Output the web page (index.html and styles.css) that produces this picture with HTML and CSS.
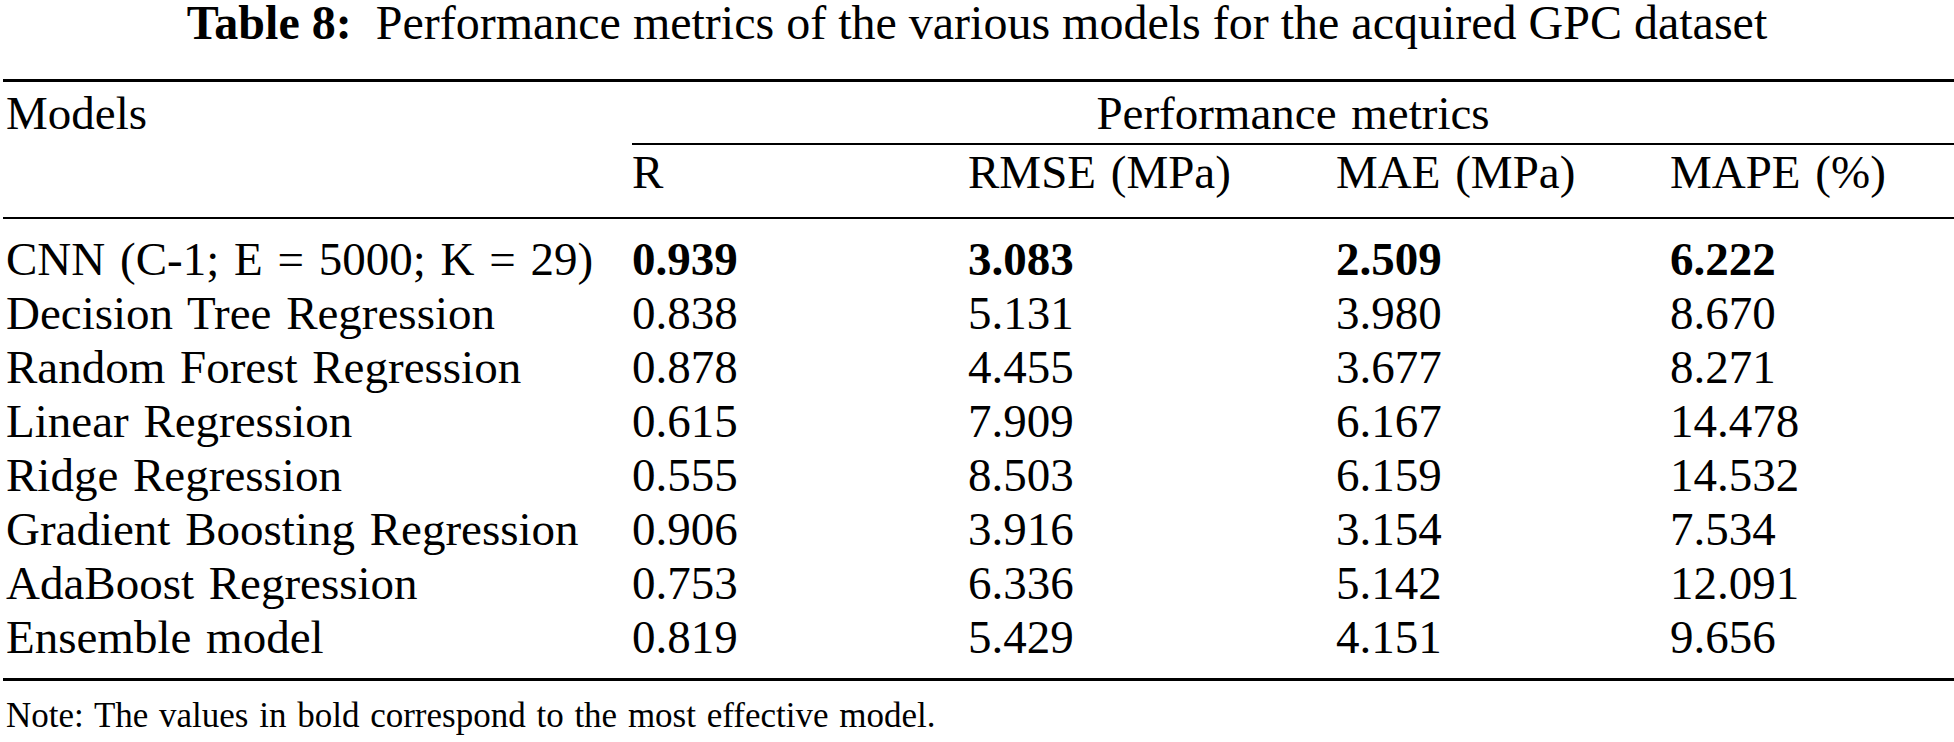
FILE: index.html
```html
<!DOCTYPE html>
<html lang="en">
<head>
<meta charset="utf-8">
<title>Table 8</title>
<link rel="stylesheet" href="styles.css">
</head>
<body>
<div class="page">
  <div class="caption"><span class="cap-label">Table 8:</span>&nbsp; Performance metrics of the various models for the acquired GPC dataset</div>
  <table class="metrics">
    <colgroup>
      <col class="c-model">
      <col class="c-r">
      <col class="c-rmse">
      <col class="c-mae">
      <col class="c-mape">
    </colgroup>
    <thead>
      <tr class="head-1">
        <th class="cell-model">Models</th>
        <th class="group" colspan="4">Performance metrics</th>
      </tr>
      <tr class="head-2">
        <th class="cell-model"></th>
        <th>R</th>
        <th>RMSE (MPa)</th>
        <th>MAE (MPa)</th>
        <th>MAPE (%)</th>
      </tr>
    </thead>
    <tbody>
      <tr class="first">
        <td class="cell-model">CNN (C-1; E = 5000; K = 29)</td>
        <td class="best">0.939</td>
        <td class="best">3.083</td>
        <td class="best">2.509</td>
        <td class="best">6.222</td>
      </tr>
      <tr>
        <td class="cell-model">Decision Tree Regression</td>
        <td>0.838</td><td>5.131</td><td>3.980</td><td>8.670</td>
      </tr>
      <tr>
        <td class="cell-model">Random Forest Regression</td>
        <td>0.878</td><td>4.455</td><td>3.677</td><td>8.271</td>
      </tr>
      <tr>
        <td class="cell-model">Linear Regression</td>
        <td>0.615</td><td>7.909</td><td>6.167</td><td>14.478</td>
      </tr>
      <tr>
        <td class="cell-model">Ridge Regression</td>
        <td>0.555</td><td>8.503</td><td>6.159</td><td>14.532</td>
      </tr>
      <tr>
        <td class="cell-model">Gradient Boosting Regression</td>
        <td>0.906</td><td>3.916</td><td>3.154</td><td>7.534</td>
      </tr>
      <tr>
        <td class="cell-model">AdaBoost Regression</td>
        <td>0.753</td><td>6.336</td><td>5.142</td><td>12.091</td>
      </tr>
      <tr class="last">
        <td class="cell-model">Ensemble model</td>
        <td>0.819</td><td>5.429</td><td>4.151</td><td>9.656</td>
      </tr>
    </tbody>
  </table>
  <p class="note">Note: The values in bold correspond to the most effective model.</p>
</div>
</body>
</html>
```

FILE: styles.css
```css
html, body {
  margin: 0;
  padding: 0;
  background: #ffffff;
}

body {
  font-family: "Liberation Serif", "Times New Roman", serif;
  color: #000000;
}

.page {
  width: 1954px;
}

.caption {
  font-size: 48px;
  line-height: 46px;
  height: 46px;
  padding-top: 0;
  text-align: center;
  margin: 0 0 33px 0;
  white-space: nowrap;
}

.cap-label {
  font-weight: bold;
}

.metrics {
  margin-left: 3px;
  width: 1951px;
  table-layout: fixed;
  border-collapse: separate;
  border-spacing: 0;
  border-top: 3px solid #000;
  font-size: 47px;
  line-height: 54px;
  word-spacing: 3px;
}

.c-model { width: 629px; }
.c-r { width: 336px; }
.c-rmse { width: 368px; }
.c-mae { width: 334px; }
.c-mape { width: 284px; }

.metrics th,
.metrics td {
  padding: 0;
  text-align: left;
  font-weight: normal;
  white-space: nowrap;
  vertical-align: baseline;
}

.metrics .cell-model {
  padding-left: 3px;
}

.head-1 th {
  padding-top: 4px;
  padding-bottom: 3px;
}

.head-1 .group {
  text-align: center;
  border-bottom: 2px solid #000;
}

.head-2 th {
  padding-top: 0;
  padding-bottom: 18px;
  border-bottom: 2px solid #000;
}

.metrics tbody tr.first td {
  padding-top: 13px;
}

.metrics tbody tr.last td {
  padding-bottom: 14px;
  border-bottom: 3px solid #000;
}

.metrics td.best {
  font-weight: bold;
}

.note {
  margin: 15px 0 0 6px;
  font-size: 35px;
  line-height: 40px;
  word-spacing: 2px;
}
```
